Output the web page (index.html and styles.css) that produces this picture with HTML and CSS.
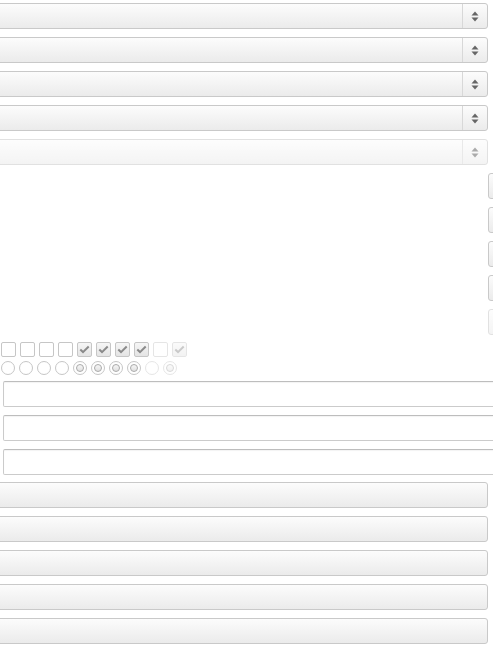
FILE: index.html
```html
<!DOCTYPE html>
<html>
<head>
<meta charset="utf-8">
<link rel="stylesheet" href="styles.css">
</head>
<body>
<div class="page">
  <div class="select"><span class="select-body"></span><span class="arrow"><svg width="8" height="11" viewBox="0 0 8 11"><path d="M4 0.5 L7.5 4.5 H0.5 Z M4 10.5 L7.5 6.5 H0.5 Z" fill="#666"/></svg></span></div>
  <div class="select"><span class="select-body"></span><span class="arrow"><svg width="8" height="11" viewBox="0 0 8 11"><path d="M4 0.5 L7.5 4.5 H0.5 Z M4 10.5 L7.5 6.5 H0.5 Z" fill="#666"/></svg></span></div>
  <div class="select"><span class="select-body"></span><span class="arrow"><svg width="8" height="11" viewBox="0 0 8 11"><path d="M4 0.5 L7.5 4.5 H0.5 Z M4 10.5 L7.5 6.5 H0.5 Z" fill="#666"/></svg></span></div>
  <div class="select"><span class="select-body"></span><span class="arrow"><svg width="8" height="11" viewBox="0 0 8 11"><path d="M4 0.5 L7.5 4.5 H0.5 Z M4 10.5 L7.5 6.5 H0.5 Z" fill="#666"/></svg></span></div>
  <div class="select disabled"><span class="select-body"></span><span class="arrow"><svg width="8" height="11" viewBox="0 0 8 11"><path d="M4 0.5 L7.5 4.5 H0.5 Z M4 10.5 L7.5 6.5 H0.5 Z" fill="#666"/></svg></span></div>

  <div class="side-btn"></div>
  <div class="side-btn"></div>
  <div class="side-btn"></div>
  <div class="side-btn"></div>
  <div class="side-btn disabled"></div>

  <div class="checks">
    <span class="cb"></span>
    <span class="cb"></span>
    <span class="cb"></span>
    <span class="cb"></span>
    <span class="cb checked"><svg width="11" height="9" viewBox="0 0 11 9"><path d="M1.3 4.6 L4 7.1 L9.7 1.5" fill="none" stroke="#8a8a8a" stroke-width="2"/></svg></span>
    <span class="cb checked"><svg width="11" height="9" viewBox="0 0 11 9"><path d="M1.3 4.6 L4 7.1 L9.7 1.5" fill="none" stroke="#8a8a8a" stroke-width="2"/></svg></span>
    <span class="cb checked"><svg width="11" height="9" viewBox="0 0 11 9"><path d="M1.3 4.6 L4 7.1 L9.7 1.5" fill="none" stroke="#8a8a8a" stroke-width="2"/></svg></span>
    <span class="cb checked"><svg width="11" height="9" viewBox="0 0 11 9"><path d="M1.3 4.6 L4 7.1 L9.7 1.5" fill="none" stroke="#8a8a8a" stroke-width="2"/></svg></span>
    <span class="cb disabled"></span>
    <span class="cb checked disabled"><svg width="11" height="9" viewBox="0 0 11 9"><path d="M1.3 4.6 L4 7.1 L9.7 1.5" fill="none" stroke="#8a8a8a" stroke-width="2"/></svg></span>
  </div>
  <div class="radios">
    <span class="rb"></span>
    <span class="rb"></span>
    <span class="rb"></span>
    <span class="rb"></span>
    <span class="rb checked"><span class="dot"></span></span>
    <span class="rb checked"><span class="dot"></span></span>
    <span class="rb checked"><span class="dot"></span></span>
    <span class="rb checked"><span class="dot"></span></span>
    <span class="rb disabled"></span>
    <span class="rb checked disabled"><span class="dot"></span></span>
  </div>

  <div class="field"></div>
  <div class="field"></div>
  <div class="field"></div>

  <div class="btn"></div>
  <div class="btn"></div>
  <div class="btn"></div>
  <div class="btn"></div>
  <div class="btn"></div>
</div>
</body>
</html>
```

FILE: styles.css
```css
html, body {
  margin: 0;
  padding: 0;
  background: #fff;
  overflow: hidden;
  font-family: "Liberation Sans", Arial, sans-serif;
}

.page {
  width: 493px;
  height: 649px;
  padding-top: 3px;
  box-sizing: border-box;
  display: flex;
  flex-direction: column;
  gap: 8px;
  overflow: hidden;
}

.select {
  flex: none;
  display: flex;
  height: 26px;
  margin-left: -12px;
  margin-right: 5px;
  box-sizing: border-box;
  border: 1px solid #c9c9c9;
  border-radius: 3px;
  background: linear-gradient(#fcfcfc, #ebebeb);
}

.select-body {
  flex: 1;
}

.arrow {
  width: 24px;
  border-left: 1px solid #d8d8d8;
  display: flex;
  align-items: center;
  justify-content: center;
}

.select.disabled {
  opacity: 0.55;
}

.side-btn {
  flex: none;
  height: 26px;
  width: 30px;
  margin-left: 488px;
  box-sizing: border-box;
  border: 1px solid #c9c9c9;
  border-radius: 3px;
  background: linear-gradient(#fcfcfc, #ebebeb);
}

.side-btn.disabled {
  opacity: 0.55;
}

.checks {
  flex: none;
  display: flex;
  gap: 4px;
  margin-left: 1px;
  margin-top: -1px;
}

.cb {
  width: 15px;
  height: 15px;
  box-sizing: border-box;
  border: 1px solid #c6c6c6;
  border-radius: 2px;
  background: #fff;
  display: flex;
  align-items: center;
  justify-content: center;
}

.cb.checked {
  background: linear-gradient(#f6f6f6, #e4e4e4);
}

.cb.disabled {
  opacity: 0.45;
}

.radios {
  flex: none;
  display: flex;
  gap: 4px;
  margin-left: 1px;
  margin-top: -4px;
}

.rb {
  width: 14px;
  height: 14px;
  box-sizing: border-box;
  border: 1px solid #c6c6c6;
  border-radius: 50%;
  background: #fff;
  display: flex;
  align-items: center;
  justify-content: center;
}

.rb .dot {
  width: 8px;
  height: 8px;
  box-sizing: border-box;
  border-radius: 50%;
  border: 1px solid #aaaaaa;
  background: linear-gradient(#f6f6f6, #e0e0e0);
}

.rb.disabled {
  opacity: 0.45;
}

.field {
  flex: none;
  height: 26px;
  width: 520px;
  margin-left: 3px;
  box-sizing: border-box;
  border: 1px solid #cbcbcb;
  border-top-color: #bdbdbd;
  border-radius: 2px;
  background: #fff;
  box-shadow: inset 0 1px 1px rgba(0, 0, 0, 0.05);
}

.radios + .field {
  margin-top: -2px;
}

.btn {
  flex: none;
  height: 26px;
  margin-left: -12px;
  margin-right: 5px;
  box-sizing: border-box;
  border: 1px solid #c9c9c9;
  border-radius: 3px;
  background: linear-gradient(#fcfcfc, #ebebeb);
}

.field + .btn {
  margin-top: -1px;
}
```
